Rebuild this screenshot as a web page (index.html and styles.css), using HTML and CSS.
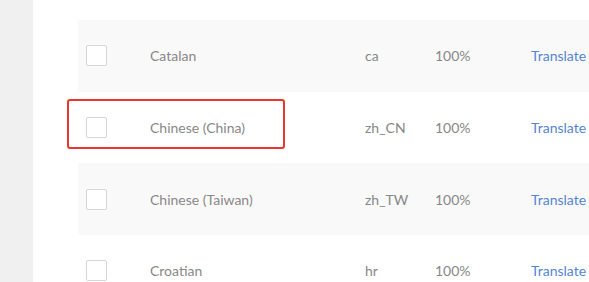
FILE: index.html
```html
<!DOCTYPE html>
<html lang="en">
<head>
  <meta charset="UTF-8">
  <title>Languages</title>
  <link rel="stylesheet" href="styles.css">
</head>
<body>
  <div class="page">
    <div class="sidebar"></div>
    <div class="main">
      <div class="lang-list">
        <div class="row striped">
          <span class="check"></span>
          <span class="name">Catalan</span>
          <span class="code">ca</span>
          <span class="pct">100%</span>
          <a class="translate" href="#">Translate</a>
        </div>
        <div class="row">
          <span class="check"></span>
          <span class="name">Chinese (China)</span>
          <span class="code">zh_CN</span>
          <span class="pct">100%</span>
          <a class="translate" href="#">Translate</a>
          <!-- highlight box -->
          <div class="highlight"></div>
        </div>
        <div class="row striped">
          <span class="check"></span>
          <span class="name">Chinese (Taiwan)</span>
          <span class="code">zh_TW</span>
          <span class="pct">100%</span>
          <a class="translate" href="#">Translate</a>
        </div>
        <div class="row">
          <span class="check"></span>
          <span class="name">Croatian</span>
          <span class="code">hr</span>
          <span class="pct">100%</span>
          <a class="translate" href="#">Translate</a>
        </div>
      </div>
    </div>
  </div>
</body>
</html>
```
FILE: styles.css
```css
body {
  margin: 0;
  font-family: Lato, "Open Sans", sans-serif;
  font-size: 14px;
  color: #888;
  background: #fff;
  overflow: hidden;
}
.page {
  display: flex;
  height: 282px;
  overflow: hidden;
}
.sidebar {
  width: 33px;
  flex-shrink: 0;
  background: #f0f0f0;
}
.main {
  flex: 1;
  padding: 20px 0 0 45px;
  overflow: hidden;
}
.lang-list {
  width: 511px;
}
.row {
  position: relative;
  display: flex;
  align-items: center;
  height: 71.7px;
  padding-left: 8px;
}
.row.striped {
  background: #f9f9f9;
}
.check {
  width: 19px;
  height: 19px;
  border: 1px solid #d6d6d6;
  border-radius: 2px;
  background: #fff;
  flex-shrink: 0;
}
.name {
  margin-left: 43px;
  width: 215px;
  flex-shrink: 0;
}
.code {
  width: 70px;
  flex-shrink: 0;
}
.pct {
  width: 96px;
  flex-shrink: 0;
}
.translate {
  color: #5585d6;
  text-decoration: none;
  white-space: nowrap;
}

/* red annotation box */
.highlight {
  position: absolute;
  left: -11px;
  top: 7px;
  width: 214px;
  height: 46px;
  border: 2px solid #e8372b;
  border-radius: 3px;
}
```
